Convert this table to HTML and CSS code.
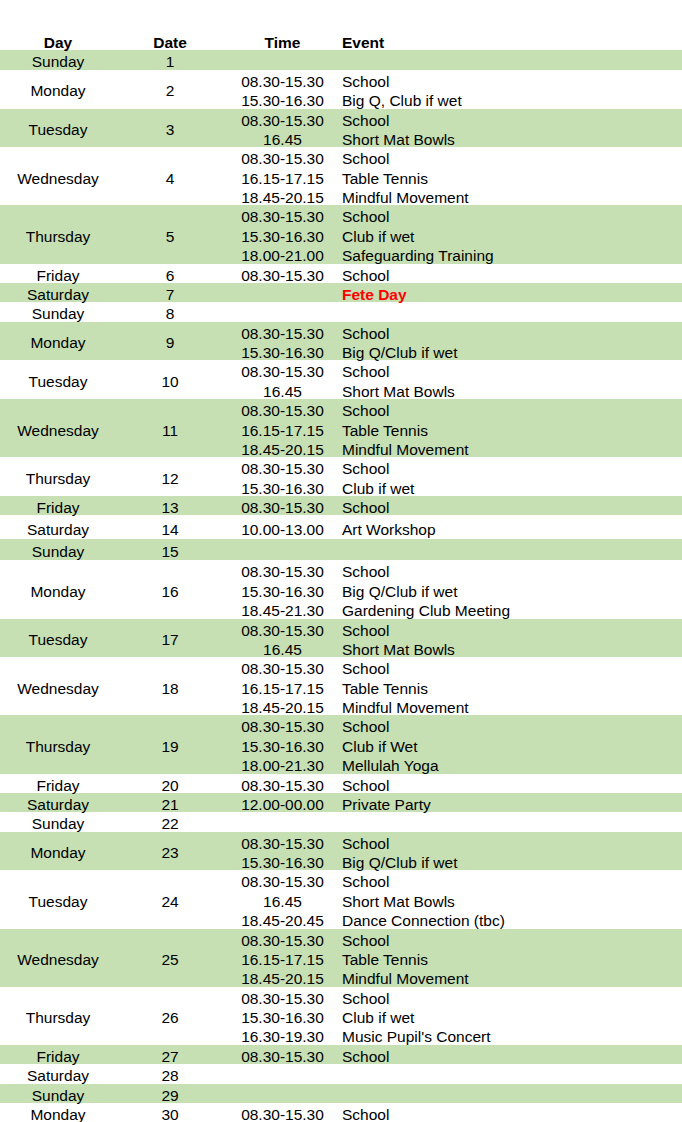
FILE: index.html
```html
<!DOCTYPE html>
<html>
<head>
<meta charset="utf-8">
<link rel="stylesheet" href="styles.css">
</head>
<body>
<div class="sheet">
  <div class="row head">
    <div class="c day"><span>Day</span></div><div class="c date"><span>Date</span></div><div class="c time"><span>Time</span></div><div class="c ev"><span>Event</span></div>
  </div>

  <div class="row g"><div class="c day"><span>Sunday</span></div><div class="c date"><span>1</span></div><div class="c time"></div><div class="c ev"></div></div>
  <div class="row"><div class="c day"><span>Monday</span></div><div class="c date"><span>2</span></div><div class="c time"><span>08.30-15.30</span><span>15.30-16.30</span></div><div class="c ev"><span>School</span><span>Big Q, Club if wet</span></div></div>
  <div class="row g"><div class="c day"><span>Tuesday</span></div><div class="c date"><span>3</span></div><div class="c time"><span>08.30-15.30</span><span>16.45</span></div><div class="c ev"><span>School</span><span>Short Mat Bowls</span></div></div>
  <div class="row"><div class="c day"><span>Wednesday</span></div><div class="c date"><span>4</span></div><div class="c time"><span>08.30-15.30</span><span>16.15-17.15</span><span>18.45-20.15</span></div><div class="c ev"><span>School</span><span>Table Tennis</span><span>Mindful Movement</span></div></div>
  <div class="row g"><div class="c day"><span>Thursday</span></div><div class="c date"><span>5</span></div><div class="c time"><span>08.30-15.30</span><span>15.30-16.30</span><span>18.00-21.00</span></div><div class="c ev"><span>School</span><span>Club if wet</span><span>Safeguarding Training</span></div></div>
  <div class="row"><div class="c day"><span>Friday</span></div><div class="c date"><span>6</span></div><div class="c time"><span>08.30-15.30</span></div><div class="c ev"><span>School</span></div></div>
  <div class="row g"><div class="c day"><span>Saturday</span></div><div class="c date"><span>7</span></div><div class="c time"></div><div class="c ev"><span class="fete">Fete Day</span></div></div>
  <div class="row"><div class="c day"><span>Sunday</span></div><div class="c date"><span>8</span></div><div class="c time"></div><div class="c ev"></div></div>
  <div class="row g"><div class="c day"><span>Monday</span></div><div class="c date"><span>9</span></div><div class="c time"><span>08.30-15.30</span><span>15.30-16.30</span></div><div class="c ev"><span>School</span><span>Big Q/Club if wet</span></div></div>
  <div class="row"><div class="c day"><span>Tuesday</span></div><div class="c date"><span>10</span></div><div class="c time"><span>08.30-15.30</span><span>16.45</span></div><div class="c ev"><span>School</span><span>Short Mat Bowls</span></div></div>
  <div class="row g"><div class="c day"><span>Wednesday</span></div><div class="c date"><span>11</span></div><div class="c time"><span>08.30-15.30</span><span>16.15-17.15</span><span>18.45-20.15</span></div><div class="c ev"><span>School</span><span>Table Tennis</span><span>Mindful Movement</span></div></div>
  <div class="row"><div class="c day"><span>Thursday</span></div><div class="c date"><span>12</span></div><div class="c time"><span>08.30-15.30</span><span>15.30-16.30</span></div><div class="c ev"><span>School</span><span>Club if wet</span></div></div>
  <div class="row g"><div class="c day"><span>Friday</span></div><div class="c date"><span>13</span></div><div class="c time"><span>08.30-15.30</span></div><div class="c ev"><span>School</span></div></div>
  <div class="row tall"><div class="c day"><span>Saturday</span></div><div class="c date"><span>14</span></div><div class="c time"><span>10.00-13.00</span></div><div class="c ev"><span>Art Workshop</span></div></div>
  <div class="row g mid"><div class="c day"><span>Sunday</span></div><div class="c date"><span>15</span></div><div class="c time"></div><div class="c ev"></div></div>
  <div class="row"><div class="c day"><span>Monday</span></div><div class="c date"><span>16</span></div><div class="c time"><span>08.30-15.30</span><span>15.30-16.30</span><span>18.45-21.30</span></div><div class="c ev"><span>School</span><span>Big Q/Club if wet</span><span>Gardening Club Meeting</span></div></div>
  <div class="row g"><div class="c day"><span>Tuesday</span></div><div class="c date"><span>17</span></div><div class="c time"><span>08.30-15.30</span><span>16.45</span></div><div class="c ev"><span>School</span><span>Short Mat Bowls</span></div></div>
  <div class="row"><div class="c day"><span>Wednesday</span></div><div class="c date"><span>18</span></div><div class="c time"><span>08.30-15.30</span><span>16.15-17.15</span><span>18.45-20.15</span></div><div class="c ev"><span>School</span><span>Table Tennis</span><span>Mindful Movement</span></div></div>
  <div class="row g"><div class="c day"><span>Thursday</span></div><div class="c date"><span>19</span></div><div class="c time"><span>08.30-15.30</span><span>15.30-16.30</span><span>18.00-21.30</span></div><div class="c ev"><span>School</span><span>Club if Wet</span><span>Mellulah Yoga</span></div></div>
  <div class="row"><div class="c day"><span>Friday</span></div><div class="c date"><span>20</span></div><div class="c time"><span>08.30-15.30</span></div><div class="c ev"><span>School</span></div></div>
  <div class="row g"><div class="c day"><span>Saturday</span></div><div class="c date"><span>21</span></div><div class="c time"><span>12.00-00.00</span></div><div class="c ev"><span>Private Party</span></div></div>
  <div class="row"><div class="c day"><span>Sunday</span></div><div class="c date"><span>22</span></div><div class="c time"></div><div class="c ev"></div></div>
  <div class="row g"><div class="c day"><span>Monday</span></div><div class="c date"><span>23</span></div><div class="c time"><span>08.30-15.30</span><span>15.30-16.30</span></div><div class="c ev"><span>School</span><span>Big Q/Club if wet</span></div></div>
  <div class="row"><div class="c day"><span>Tuesday</span></div><div class="c date"><span>24</span></div><div class="c time"><span>08.30-15.30</span><span>16.45</span><span>18.45-20.45</span></div><div class="c ev"><span>School</span><span>Short Mat Bowls</span><span>Dance Connection (tbc)</span></div></div>
  <div class="row g"><div class="c day"><span>Wednesday</span></div><div class="c date"><span>25</span></div><div class="c time"><span>08.30-15.30</span><span>16.15-17.15</span><span>18.45-20.15</span></div><div class="c ev"><span>School</span><span>Table Tennis</span><span>Mindful Movement</span></div></div>
  <div class="row"><div class="c day"><span>Thursday</span></div><div class="c date"><span>26</span></div><div class="c time"><span>08.30-15.30</span><span>15.30-16.30</span><span>16.30-19.30</span></div><div class="c ev"><span>School</span><span>Club if wet</span><span>Music Pupil's Concert</span></div></div>
  <div class="row g"><div class="c day"><span>Friday</span></div><div class="c date"><span>27</span></div><div class="c time"><span>08.30-15.30</span></div><div class="c ev"><span>School</span></div></div>
  <div class="row"><div class="c day"><span>Saturday</span></div><div class="c date"><span>28</span></div><div class="c time"></div><div class="c ev"></div></div>
  <div class="row g"><div class="c day"><span>Sunday</span></div><div class="c date"><span>29</span></div><div class="c time"></div><div class="c ev"></div></div>
  <div class="row"><div class="c day"><span>Monday</span></div><div class="c date"><span>30</span></div><div class="c time"><span>08.30-15.30</span></div><div class="c ev"><span>School</span></div></div>
</div>
</body>
</html>
```

FILE: styles.css
```css
html, body {
  margin: 0;
  padding: 0;
  background: #ffffff;
}
body {
  font-family: "Liberation Sans", Arial, sans-serif;
  font-size: 15.5px;
  color: #000000;
  overflow: hidden;
}
.sheet {
  padding-top: 31px;
}
.row {
  display: grid;
  grid-template-columns: 116px 108px 117px 1fr;
  min-height: 19.375px;
}
.row.g {
  background: #c6e0b4;
}
.row.tall {
  min-height: 24px;
}
.row.mid {
  min-height: 21px;
}
.head {
  font-weight: bold;
  min-height: 19px;
}
.c {
  display: flex;
  flex-direction: column;
  justify-content: center;
  white-space: nowrap;
}
.c > span {
  display: block;
  height: 19.375px;
  line-height: 24px;
}
.day, .date, .time {
  align-items: center;
  text-align: center;
}
.ev {
  align-items: flex-start;
  padding-left: 1px;
}
.fete {
  color: #ff0000;
  font-weight: bold;
}
```
